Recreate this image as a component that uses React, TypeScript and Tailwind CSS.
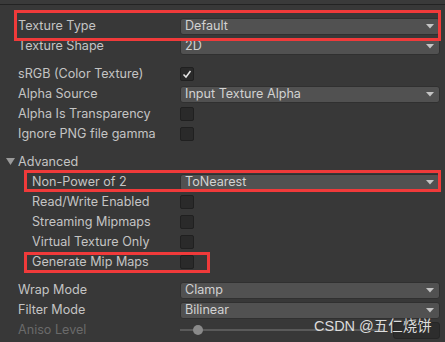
import React from 'react'

// --- controls ---

function Dropdown({ value }: { value: string }) {
  return (
    <div className="h-[17px] flex-1 flex items-center justify-between rounded-[3px] border border-[#303030] bg-[#515151] pl-[4px] pr-[5px] text-[#d2d2d2]">
      <span>{value}</span>
      <svg width="8" height="5" viewBox="0 0 8 5">
        <polygon points="0,0 8,0 4,4.5" fill="#c4c4c4" />
      </svg>
    </div>
  )
}

function Checkbox({ checked }: { checked?: boolean }) {
  return (
    <div className="w-[14px] h-[14px] rounded-[2px] border border-[#202020] bg-[#2a2a2a] flex items-center justify-center">
      {checked && (
        <svg width="10" height="10" viewBox="0 0 10 10">
          <polyline points="1.5,5.5 4,8 8.5,2" fill="none" stroke="#e6e6e6" strokeWidth="1.5" />
        </svg>
      )}
    </div>
  )
}

function Row({ label, indent, dim, children }: { label: string; indent?: boolean; dim?: boolean; children: React.ReactNode }) {
  return (
    <div className="h-[20px] flex items-center">
      <div className={`w-[162px] shrink-0 ${indent ? 'pl-[14px]' : ''} ${dim ? 'text-[#6a6a6a]' : ''}`}>{label}</div>
      <div className="flex-1 flex items-center">{children}</div>
    </div>
  )
}

export default function App() {
  return (
    <div
      className="relative w-[445px] h-[342px] overflow-hidden bg-[#383838] text-[12.6px] text-[#c4c4c4]"
      style={{ fontFamily: 'Inter, "Noto Sans", sans-serif' }}
    >
      <div className="h-[4px] bg-[#3a3a3a]" />
      <div className="h-px bg-[#232323]" />
      <div className="pt-[11px] pl-[18px] pr-[5px] flex flex-col">
        <Row label="Texture Type"><Dropdown value="Default" /></Row>
        <Row label="Texture Shape"><Dropdown value="2D" /></Row>
        <div className="h-[8px]" />
        <Row label="sRGB (Color Texture)"><Checkbox checked /></Row>
        <Row label="Alpha Source"><Dropdown value="Input Texture Alpha" /></Row>
        <Row label="Alpha Is Transparency"><Checkbox /></Row>
        <Row label="Ignore PNG file gamma"><Checkbox /></Row>
        <div className="h-[8px]" />
        <div className="h-[20px] flex items-center -ml-[12px]">
          <svg width="9" height="8" viewBox="0 0 9 8" className="mr-[3px]">
            <polygon points="0,0 9,0 4.5,7" fill="#9a9a9a" />
          </svg>
          <span>Advanced</span>
        </div>
        <Row label="Non-Power of 2" indent><Dropdown value="ToNearest" /></Row>
        <Row label="Read/Write Enabled" indent><Checkbox /></Row>
        <Row label="Streaming Mipmaps" indent><Checkbox /></Row>
        <Row label="Virtual Texture Only" indent><Checkbox /></Row>
        <Row label="Generate Mip Maps" indent><Checkbox /></Row>
        <div className="h-[8px]" />
        <Row label="Wrap Mode"><Dropdown value="Clamp" /></Row>
        <Row label="Filter Mode"><Dropdown value="Bilinear" /></Row>
        <Row label="Aniso Level" dim>
          <div className="flex-1 flex items-center gap-[8px]">
            <div className="relative flex-1 h-[2px] bg-[#5a5a5a]">
              <div className="absolute left-[13px] -top-[4px] w-[10px] h-[10px] rounded-full bg-[#8a8a8a]" />
            </div>
            <div className="w-[47px] h-[17px] rounded-[3px] border border-[#262626] bg-[#2d2d2d]" />
          </div>
        </Row>
      </div>

      {/* annotation boxes */}
      <div className="absolute left-[14px] top-[10px] w-[427px] h-[31px] border-[3px] border-[#f03a3a]" />
      <div className="absolute left-[24px] top-[170px] w-[417px] h-[22px] border-[3px] border-[#f03a3a]" />
      <div className="absolute left-[24px] top-[252px] w-[186px] h-[21px] border-[3px] border-[#f03a3a]" />

      {/* watermark */}
      <div
        className="absolute left-[314px] top-[317px] text-[14.5px] leading-[18px] text-[#dcdcdc]"
        style={{ fontFamily: '"Liberation Sans", "Noto Sans CJK SC", sans-serif' }}
      >
        CSDN @五仁烧饼
      </div>
    </div>
  )
}
